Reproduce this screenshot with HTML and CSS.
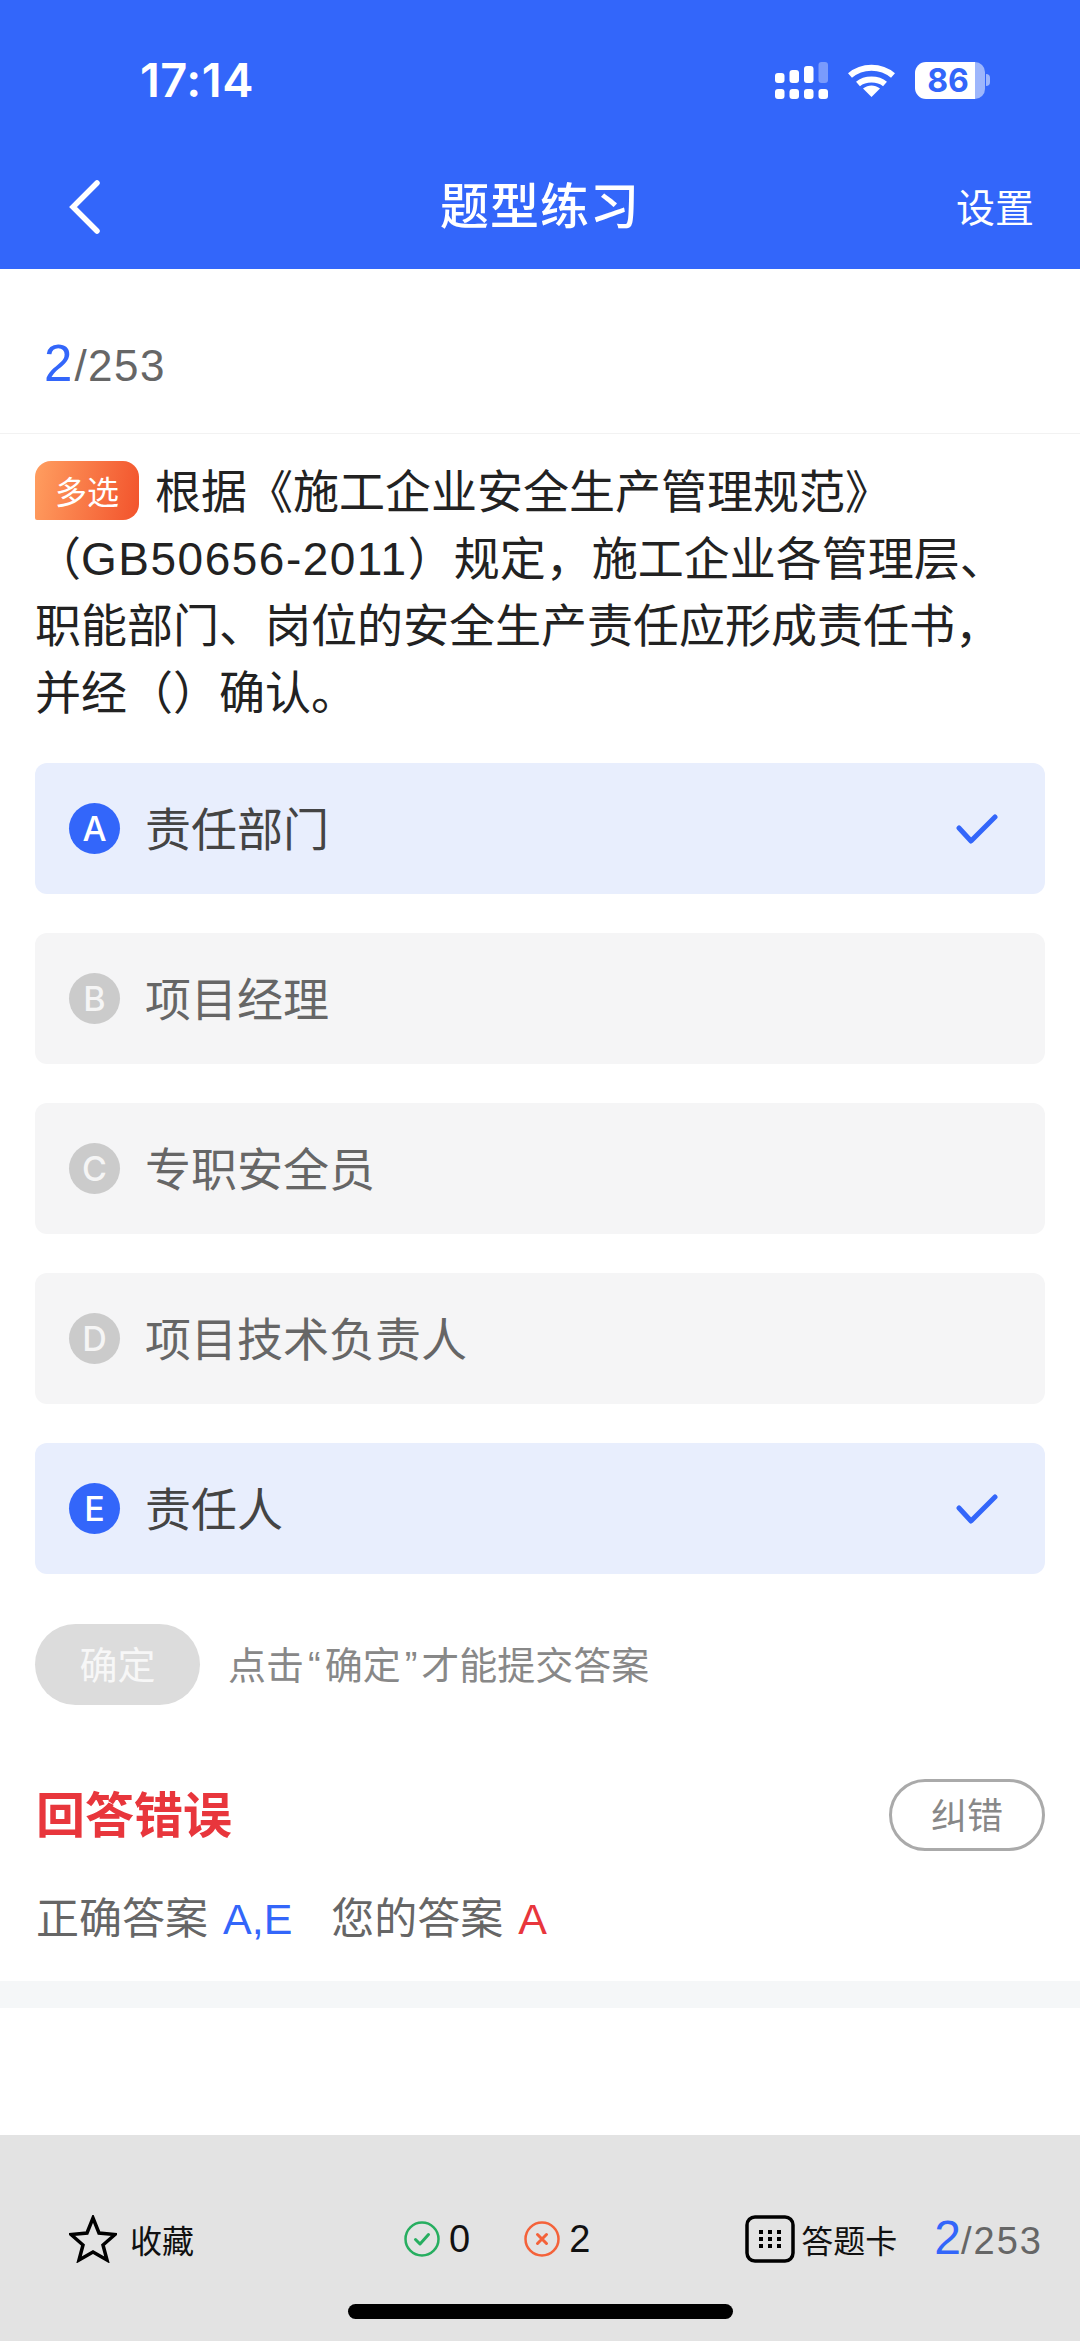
FILE: index.html
```html
<!DOCTYPE html>
<html lang="zh-CN">
<head>
<meta charset="utf-8">
<title>题型练习</title>
<link rel="stylesheet" href="styles.css">
</head>
<body>
<div class="app">
  <header class="header">
    <div class="status">
      <span class="time">17:14</span>
      <div class="status-icons">
        <svg class="signal" width="53" height="37" viewBox="0 0 53 37" fill="#fff">
          <rect x="0" y="11" width="9.500" height="10" rx="3"/><rect x="14.500" y="8" width="9.500" height="13" rx="3"/><rect x="29" y="4" width="9.500" height="17" rx="3"/><rect x="43.500" y="0" width="9.500" height="21" rx="3" opacity=".35"/>
          <rect x="0" y="27" width="9.500" height="10" rx="3"/><rect x="14.500" y="27" width="9.500" height="10" rx="3"/><rect x="29" y="27" width="9.500" height="10" rx="3"/><rect x="43.500" y="27" width="9.500" height="10" rx="3"/>
        </svg>
        <svg class="wifi" width="47" height="34" viewBox="0 0 47 34" fill="none" stroke="#fff" stroke-width="6">
          <path d="M2 12.500C14 2 33 2 45 12.500"/><path d="M10 21C17 15 30 15 37 21"/><path d="M15 25.500L23.500 34L32 25.500C26.500 21.500 20.500 21.500 15 25.500Z" fill="#fff" stroke="none"/>
        </svg>
        <div class="battery"><span class="battery-fill">86</span><span class="battery-rest"></span><span class="battery-nub"></span></div>
      </div>
    </div>
    <nav class="nav">
      <svg class="back" width="34" height="54" viewBox="0 0 34 54" fill="none" stroke="#fff" stroke-width="5.500" stroke-linecap="round" stroke-linejoin="miter"><path d="M30 3L6 27L30 51"/></svg>
      <h1 class="title">题型练习</h1>
      <span class="setting">设置</span>
    </nav>
  </header>

  <main class="main">
    <div class="counter"><span class="cur">2</span><span class="total">/253</span></div>

    <section class="question">
      <p class="q-text"><span class="tag">多选</span>根据《施工企业安全生产管理规范》（<span class="latin">GB50656-2011</span>）规定，施工企业各管理层、职能部门、岗位的安全生产责任应形成责任书，并经（）确认。</p>
    </section>

    <ul class="options">
      <li class="option on"><span class="letter">A</span><span class="opt-text">责任部门</span>
        <svg class="tick" width="42" height="30" viewBox="0 0 42 30" fill="none" stroke="#3366fa" stroke-width="5" stroke-linecap="round" stroke-linejoin="round"><path d="M3 14L15 27L39 3"/></svg></li>
      <li class="option"><span class="letter">B</span><span class="opt-text">项目经理</span></li>
      <li class="option"><span class="letter">C</span><span class="opt-text">专职安全员</span></li>
      <li class="option"><span class="letter">D</span><span class="opt-text">项目技术负责人</span></li>
      <li class="option on"><span class="letter">E</span><span class="opt-text">责任人</span>
        <svg class="tick" width="42" height="30" viewBox="0 0 42 30" fill="none" stroke="#3366fa" stroke-width="5" stroke-linecap="round" stroke-linejoin="round"><path d="M3 14L15 27L39 3"/></svg></li>
    </ul>

    <div class="confirm-row">
      <span class="confirm">确定</span>
      <span class="hint">点击<span class="quote">“</span>确定<span class="quote">”</span>才能提交答案</span>
    </div>

    <div class="result-row">
      <span class="result">回答错误</span>
      <span class="report">纠错</span>
    </div>

    <div class="answers">
      <span>正确答案<em class="blue">A,E</em></span>
      <span>您的答案<em class="red">A</em></span>
    </div>

    <div class="band"></div>
  </main>

  <footer class="footer">
    <div class="bar">
      <div class="fav">
        <svg width="48" height="48" viewBox="0 0 48 48" fill="none" stroke="#000" stroke-width="3.500" stroke-linejoin="miter"><path d="M24 3L30 18L46 19.500L34 30L38 45L24 37L10 45L14 30L2 19.500L18 18Z"/></svg>
        <span class="bar-text">收藏</span>
      </div>
      <div class="stats">
        <div class="stat">
          <svg width="36" height="36" viewBox="0 0 36 36" fill="none" stroke="#27ae60" stroke-width="2.500" stroke-linecap="round" stroke-linejoin="round"><circle cx="18" cy="18" r="16.500"/><path d="M11.500 18.500L16 23L24.500 13.500" stroke-width="3"/></svg>
          <span class="stat-num">0</span>
        </div>
        <div class="stat">
          <svg width="36" height="36" viewBox="0 0 36 36" fill="none" stroke="#f4623a" stroke-width="2.500" stroke-linecap="round"><circle cx="18" cy="18" r="16.500"/><path d="M13.500 13.500L22.500 22.500M22.500 13.500L13.500 22.500" stroke-width="3"/></svg>
          <span class="stat-num">2</span>
        </div>
      </div>
      <div class="card">
        <svg width="50" height="48" viewBox="0 0 50 48"><rect x="2" y="2" width="46" height="44" rx="8" fill="none" stroke="#000" stroke-width="3.500"/><g fill="#000"><rect x="14" y="15" width="4" height="4"/><rect x="23" y="15" width="4" height="4"/><rect x="32" y="15" width="4" height="4"/><rect x="14" y="22" width="4" height="4"/><rect x="23" y="22" width="4" height="4"/><rect x="32" y="22" width="4" height="4"/><rect x="14" y="29" width="4" height="4"/><rect x="23" y="29" width="4" height="4"/><rect x="32" y="29" width="4" height="4"/></g></svg>
        <span class="bar-text">答题卡</span>
      </div>
      <div class="mini-counter"><span class="cur">2</span><span class="total">/253</span></div>
    </div>
    <div class="home"></div>
  </footer>
</div>
</body>
</html>
```

FILE: styles.css
```css
* { box-sizing: border-box; }
html, body { margin: 0; padding: 0; }
body {
  width: 1080px;
  height: 2341px;
  overflow: hidden;
  background: #fff;
  font-family: "Inter", "Noto Sans CJK SC", sans-serif;
  color: #222;
}
.app { display: flex; flex-direction: column; height: 2341px; }

/* header */
.header { height: 269px; background: #3366fa; color: #fff; flex: none; display: flex; flex-direction: column; }
.status { height: 158px; padding: 60px 90px 0 140px; display: flex; justify-content: space-between; align-items: flex-start; }
.time { font: 600 47px/40px "Inter", sans-serif; letter-spacing: 0.5px; }
.status-icons { display: flex; align-items: flex-start; margin-top: 2px; }
.wifi { margin-left: 20px; margin-top: 1px; }
.battery { display: flex; width: 75px; height: 37px; margin-left: 20px; position: relative; }
.battery-fill { width: 60px; height: 37px; background: #fff; border-radius: 11px 0 0 11px; color: #3366fa; font: 700 32px/37px "Inter", sans-serif; text-align: center; padding-left: 6px; }
.battery-rest { width: 10px; height: 37px; background: #9db6fc; border-radius: 0 11px 11px 0; }
.battery-nub { width: 4px; height: 12px; margin-top: 12px; margin-left: 1px; background: #9db6fc; border-radius: 0 4px 4px 0; }

.nav { flex: 1; position: relative; display: flex; align-items: center; justify-content: center; padding-bottom: 22px; }
.back { position: absolute; left: 67px; top: 22px; }
.title { margin: 0; font: 500 49px/60px "Noto Sans CJK SC", sans-serif; letter-spacing: 1px; }
.setting { position: absolute; right: 46px; top: 23px; font: 400 39px/48px "Noto Sans CJK SC", sans-serif; }

/* main */
.main { flex: 1; display: flex; flex-direction: column; }
.counter { height: 165px; border-bottom: 1px solid #f2f2f2; padding: 65px 0 0 44px; display: flex; align-items: baseline; }
.cur { color: #3366fa; font: 400 51px/60px "Liberation Sans", sans-serif; }
.total { color: #666; font: 400 44px/60px "Liberation Sans", sans-serif; letter-spacing: 1.500px; margin-left: 2px; }

.question { padding: 21px 35px 0 35px; }
.q-text { margin: 0; width: 1008px; font: 400 46px/67px "Noto Sans CJK SC", sans-serif; color: #222; }
.latin { font-family: "Liberation Sans", sans-serif; line-height: 1; letter-spacing: 1.500px; }
.tag {
  display: inline-block;
  width: 104px;
  height: 59px;
  margin: -10px 16px -10px 0;
  vertical-align: 4px;
  border-radius: 16px 16px 16px 2px;
  background: linear-gradient(100deg, #ff9e60, #f2532c);
  color: #fff;
  font: 400 32px/58px "Noto Sans CJK SC", sans-serif;
  text-align: center;
}

.options { list-style: none; margin: 40px 0 0; padding: 0 35px; display: flex; flex-direction: column; gap: 39px; }
.option { height: 131px; border-radius: 12px; background: #f5f5f6; display: flex; align-items: center; padding: 0 47px 0 34px; }
.option.on { background: #e8eefd; }
.letter { flex: none; width: 51px; height: 51px; border-radius: 50%; background: #cbcbcb; color: #f5f5f5; font: 500 34px/51px "Inter", sans-serif; text-align: center; }
.on .letter { background: #3366fa; color: #fff; }
.opt-text { flex: 1; margin-left: 25px; padding-bottom: 6px; font: 400 46px/60px "Noto Sans CJK SC", sans-serif; color: #666; }
.on .opt-text { color: #444; }

.confirm-row { display: flex; align-items: center; padding: 50px 35px 0; }
.confirm { width: 165px; height: 81px; border-radius: 41px; background: #dcdcdc; color: #f7f7f7; font: 400 38px/78px "Noto Sans CJK SC", sans-serif; text-align: center; }
.hint { margin-left: 28px; padding-bottom: 4px; font: 400 38px/50px "Noto Sans CJK SC", sans-serif; color: #888; }
.quote { font-family: "Liberation Sans", sans-serif; line-height: 1; margin: 0 4px; }

.result-row { display: flex; justify-content: space-between; align-items: flex-start; padding: 74px 35px 0 36px; }
.result { font: 700 49px/66px "Noto Sans CJK SC", sans-serif; color: #e8363c; }
.report { width: 156px; height: 72px; border: 3px solid #aaa; border-radius: 36px; color: #888; font: 400 36px/63px "Noto Sans CJK SC", sans-serif; text-align: center; }

.answers { display: flex; gap: 39px; padding: 34px 35px 0 36px; font: 400 43px/60px "Noto Sans CJK SC", sans-serif; color: #666; }
.answers em { font: 400 43px/1 "Liberation Sans", sans-serif; margin-left: 15px; }
.blue { color: #3366fa; }
.red { color: #e8363c; }
.band { height: 27px; margin-top: 36px; background: #f5f7f8; }

/* footer */
.footer { flex: none; height: 206px; background: #e3e3e3; position: relative; }
.bar { display: flex; align-items: center; height: 48px; position: absolute; left: 0; right: 0; top: 80px; }
.fav { display: flex; align-items: center; margin-left: 69px; }
.bar-text { font: 400 32px/48px "Noto Sans CJK SC", sans-serif; color: #111; margin-left: 13px; }
.stats { display: flex; gap: 54px; margin-left: 210px; }
.stat { display: flex; align-items: center; gap: 9px; }
.stat-num { font: 400 38px/48px "Liberation Sans", sans-serif; color: #111; }
.card { display: flex; align-items: center; margin-left: 155px; }
.card .bar-text { margin-left: 6px; }
.mini-counter { display: flex; align-items: baseline; margin-left: 37px; }
.mini-counter .cur { font-size: 48px; line-height: 48px; }
.mini-counter .total { font-size: 38px; line-height: 48px; letter-spacing: 2px; margin-left: 0; }
.home { position: absolute; left: 348px; top: 169px; width: 385px; height: 15px; border-radius: 8px; background: #000; }
```
